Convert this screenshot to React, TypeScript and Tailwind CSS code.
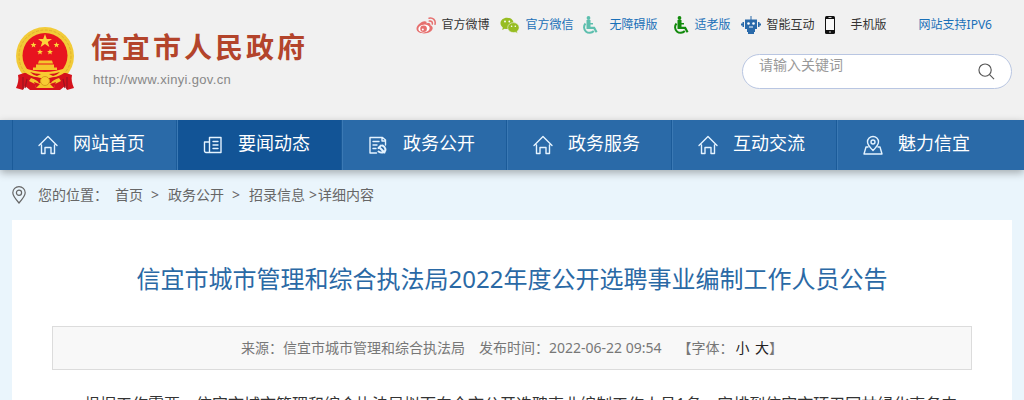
import type { ReactNode } from 'react'

const Emblem = () => (
  <svg viewBox="0 0 60 65" className="h-[65px] w-[60px] shrink-0">
    <circle cx="30" cy="30" r="29" fill="#f2cb38" />
    <circle cx="30" cy="30" r="26" fill="none" stroke="#e0b02e" strokeWidth="1" strokeDasharray="3 1.500" />
    <path d="M9 47l-6 2c1 4 0 9-2 13l7 2 2-4 5 4h30l5-4 2 4 7-2c-2-4-3-9-2-13l-6-2z" fill="#d5121c" />
    <path d="M8 51v12M12 53l-2 9M52 51v12M48 53l2 9" stroke="#9c1420" strokeWidth="1.200" />
    <circle cx="30" cy="29.500" r="22.500" fill="#e8141f" />
    <path d="M30 8l1.800 5h5.200l-4.200 3.100 1.600 5-4.400-3-4.400 3 1.600-5L23 13h5.200z" fill="#fcd53a" />
    <path d="M18.500 16l.8 1.900 2.100.1-1.600 1.400.5 2.100-1.800-1.200-1.800 1.200.5-2.100-1.600-1.400 2.100-.1zM41.500 16l.8 1.900 2.100.1-1.600 1.400.5 2.100-1.800-1.200-1.800 1.200.5-2.100-1.600-1.400 2.100-.1zM25 23l.8 1.900 2.100.1-1.600 1.400.5 2.100-1.800-1.200-1.800 1.200.5-2.100-1.600-1.400 2.100-.1zM35 23l.8 1.900 2.100.1-1.600 1.400.5 2.100-1.800-1.200-1.800 1.200.5-2.100-1.600-1.400 2.100-.1z" fill="#fcd53a" />
    <path d="M24 34.500h13l1 3H23zM21 38.500h18v3h3v2.500H18v-2.500h3z" fill="#f5c52c" />
    <path d="M12 43c5 1 11 3 18 3s13-2 18-3c2 1 2 3 1 4-5 4-11 4-15 5h-8c-4-1-10-1-15-5-1-1-1-3 1-4z" fill="#f8cc32" />
    <path d="M15 46c4 1 7 2 11 2l-4 2c-3-1-5-2-7-4zM45 46c-4 1-7 2-11 2l4 2c3-1 5-2 7-4z" fill="#d5121c" />
    <path d="M16 52c4 1 7 3 8 5h12c1-2 4-4 8-5l2 3-6 3-1 4H21l-1-4-6-3z" fill="#f5c52c" />
    <path d="M19 56l6 2-4 4zM41 56l-6 2 4 4z" fill="#d5121c" />
    <circle cx="30" cy="55" r="4.500" fill="#f8cc32" stroke="#d99b1c" strokeWidth="1" />
  </svg>
)

const Weibo = () => (
  <svg viewBox="0 0 20 17" className="h-[17px] w-5">
    <path d="M8.500 4.200C5 4.500.5 8.600.5 11.800c0 2.900 3.600 4.700 7.500 4.700 5 0 8.700-2.700 8.700-5.400 0-1.700-1.400-2.500-2.400-2.800.7-2-.8-3-3.800-1.900C11 4.800 10 4 8.500 4.200z" fill="#e6706f" />
    <ellipse cx="8" cy="11.500" rx="5.700" ry="3.900" fill="#fff" transform="rotate(-8 8 11.500)" />
    <circle cx="7.600" cy="11.700" r="3.300" fill="#e6706f" />
    <circle cx="6.800" cy="12.400" r="1" fill="#fff" />
    <path d="M13 1.200c4-.9 7 2 6 6M13.300 4c2-.4 3.400 1 3 3" fill="none" stroke="#e6706f" strokeWidth="1.500" strokeLinecap="round" />
  </svg>
)

const Wechat = () => (
  <svg viewBox="0 0 20 17" className="h-[17px] w-5">
    <path d="M7 .8C3.300.8.5 3.200.5 6.300c0 1.700.9 3.200 2.300 4.200L2.200 13l2.500-1.300c.8.2 1.500.3 2.300.3 3.700 0 6.600-2.500 6.600-5.700S10.700.8 7 .8z" fill="#97bd22" />
    <path d="M13.500 5.600c-3.300 0-5.800 2.200-5.800 5s2.500 5 5.800 5c.7 0 1.300-.1 1.900-.3l2.200 1.300-.6-2.100c1.300-.9 2.100-2.300 2.100-3.900 0-2.800-2.400-5-5.600-5z" fill="#97bd22" stroke="#f1f1f1" strokeWidth=".6" />
    <g fill="#fff">
      <circle cx="5" cy="4.500" r=".9" />
      <circle cx="9.300" cy="4.500" r=".9" />
      <circle cx="11.600" cy="9.200" r=".8" />
      <circle cx="15.300" cy="9.200" r=".8" />
    </g>
  </svg>
)

const Wheelchair = ({ color }: { color: string }) => (
  <svg viewBox="0 0 16 18" className="h-[18px] w-4">
    <circle cx="6.500" cy="2" r="1.900" fill={color} />
    <path d="M4.500 4h4v3H11v1.500H8.500v2.200h4.300l2.700 5-1.800 1-2.200-3.700H4.500z" fill={color} />
    <path d="M3.500 7.500a5 5 0 1 0 8.300 7.500" fill="none" stroke={color} strokeWidth="2" />
  </svg>
)

const Robot = () => (
  <svg viewBox="0 0 20 18" className="h-[18px] w-5" fill="#2a6aaa">
    <path d="M9.500 0h1v4h-1zM4 3.500h12v9.500H4zM1.500 6H3v5H1.500zM17 6h1.500v5H17zM0 7.500h1.500v2H0zM18.500 7.500H20v2h-1.500zM6 13h8v3h-1v2H7v-2H6z" />
    <circle cx="7.500" cy="7.500" r="1.300" fill="#fff" />
    <circle cx="12.500" cy="7.500" r="1.300" fill="#fff" />
    <path d="M8 10.500h4v1H8z" fill="#fff" />
  </svg>
)

const Phone = () => (
  <svg viewBox="0 0 10 18" className="h-[18px] w-2.5">
    <rect width="10" height="18" rx="1.500" fill="#111" />
    <path d="M1 3h8v11H1z" fill="#f8f8f8" />
    <path d="M3.500 1.500h3M4 16h2" stroke="#ccc" strokeWidth="1" />
  </svg>
)

const NavSvg = ({ children }: { children: ReactNode }) => (
  <svg viewBox="0 0 20 20" className="size-5 shrink-0" fill="none" stroke="#e4f3ff" strokeWidth="1.400" strokeLinejoin="round" strokeLinecap="round">
    {children}
  </svg>
)

const Home = () => (
  <NavSvg>
    <path d="M1 10.500L10 1.500l9 9M3.500 10v8.500H7v-6h6v6h3.500V10" />
  </NavSvg>
)

const News = () => (
  <NavSvg>
    <path d="M6.500 17.500v-15H18v15H3a1.500 1.500 0 0 1-1.500-1.500V7h5M10 6.500h5M10 10h5M10 13.500h5" />
  </NavSvg>
)

const Party = () => (
  <NavSvg>
    <path d="M8.500 18H2V2.500h12.500L17.500 5v5M14 3v3h3M5 6.500h6M5 10h4M5 13.500h3" />
    <path d="M11.500 12.500l5 5M10.500 13l2.500-2.500M14.500 10.500c3 1.500 4 5 1.500 6.500-2 1-4 .5-5.500-.5" strokeWidth="2" />
  </NavSvg>
)

const Charm = () => (
  <NavSvg>
    <path d="M10 15.500C6.500 12 4.500 9.500 4.500 7a5.500 5.500 0 0 1 11 0c0 2.500-2 5-5.500 8.500zM5 12H3l-2 7h18l-2-7h-2" />
    <circle cx="10" cy="7" r="2" />
  </NavSvg>
)

const menu = [
  { name: '网站首页', icon: <Home /> },
  { name: '要闻动态', icon: <News />, active: true },
  { name: '政务公开', icon: <Party /> },
  { name: '政务服务', icon: <Home /> },
  { name: '互动交流', icon: <Home /> },
  { name: '魅力信宜', icon: <Charm /> },
]

const TopLinks = () => (
  <div className="flex h-5 items-center pr-5 text-xs leading-5 text-[#333]">
    <a href="#" className="flex items-center gap-1.5"><Weibo />官方微博</a>
    <a href="#" className="ml-2.5 flex items-center gap-1.5 text-[#1a70b8]"><Wechat />官方微信</a>
    <a href="#" className="ml-2 flex items-center gap-3 text-[#1a70b8]"><Wheelchair color="#5dbfae" />无障碍版</a>
    <a href="#" className="ml-[15px] flex items-center gap-1.5 text-[#1a70b8]"><Wheelchair color="#128a0c" />适老版</a>
    <a href="#" className="ml-2.5 flex items-center gap-1.5"><Robot />智能互动</a>
    <a href="#" className="ml-2.5 flex items-center gap-4"><Phone />手机版</a>
    <a href="#" className="ml-8 text-[#1a70b8]">网站支持IPV6</a>
  </div>
)

const Header = () => (
  <header className="h-[120px] bg-[#f1f1f1] px-3">
    <div className="mx-auto flex max-w-[1000px] items-start justify-between">
      <a href="#" className="flex gap-4 pt-[26px] pl-[3px]">
        <Emblem />
        <div>
          <h1 className="text-[28px] leading-[42px] font-bold tracking-[3px] text-[#b3442b]">信宜市人民政府</h1>
          <p className="pl-0.5 font-['Liberation_Sans'] text-[13px] leading-6 tracking-wide text-[#888]">http://www.xinyi.gov.cn</p>
        </div>
      </a>
      <div className="flex flex-col items-end pt-[15px]">
        <TopLinks />
        <form className="mt-[19px] flex h-[35px] w-[270px] rounded-full border border-[#b9c6e2] bg-white px-4">
          <input
            type="text"
            aria-label="请输入关键词"
            placeholder="请输入关键词"
            className="h-5 min-w-0 flex-1 text-sm outline-none placeholder:text-[#999]"
          />
          <button type="submit" aria-label="搜索">
            <svg viewBox="0 0 18 18" className="size-[17px]" fill="none" stroke="#555" strokeWidth="1.200">
              <circle cx="7.500" cy="7.500" r="6.500" />
              <path d="M12 12l5 5" />
            </svg>
          </button>
        </form>
      </div>
    </div>
  </header>
)

const Nav = () => (
  <nav className="bg-[#2a6aa8] px-3 shadow-[0_3px_8px_rgba(0,0,0,0.3)]">
    <ul className="mx-auto flex max-w-[1000px] border-l border-[#1b5b99]">
      {menu.map((item) => (
        <li
          key={item.name}
          className={`group w-[165px] border-r border-[#3b79b4] last:border-r-0 ${item.active ? 'bg-[#125496]' : ''}`}
        >
          <a href="#" className="flex h-[50px] items-center gap-[15px] border-r border-[#1b5b99] pl-[25px] text-lg text-white group-last:border-r-0">
            {item.icon}
            <span className="pb-1">{item.name}</span>
          </a>
        </li>
      ))}
    </ul>
  </nav>
)

const Breadcrumb = () => (
  <div className="flex h-[50px] items-center text-sm text-[#666]">
    <svg viewBox="0 0 14 18" className="mr-3 h-[18px] w-3.5" fill="none" stroke="#666" strokeWidth="1.200">
      <path d="M7 17C3 12.500 .8 9.700.8 6.800a6.200 6.200 0 0 1 12.400 0C13.200 9.700 11 12.500 7 17z" />
      <circle cx="7" cy="6.800" r="2.600" />
    </svg>
    <span className="mr-[7px]">您的位置：</span>
    <a href="#">首页</a>
    <span className="mr-[9px] ml-2">&gt;</span>
    <a href="#">政务公开</a>
    <span className="mr-[9px] ml-2">&gt;</span>
    <a href="#">招录信息</a>
    <span className="ml-1">&gt;</span>
    <span className="ml-px">详细内容</span>
  </div>
)

const App = () => {
  return (
    <div className="h-screen overflow-hidden bg-[#eaf5fc] font-['Noto_Sans','Noto_Sans_CJK_SC',sans-serif]">
      <Header />
      <Nav />
      <main className="px-3">
        <div className="mx-auto max-w-[1000px]">
          <Breadcrumb />
          <article className="bg-white px-10 pt-[41px] pb-10">
            <h2 className="text-center text-2xl leading-9 text-[#2a69a5]">
              信宜市城市管理和综合执法局2022年度公开选聘事业编制工作人员公告
            </h2>
            <div className="mt-[29px] flex h-11 items-center justify-center border border-[#dcdcdc] bg-[#f8f8f8] text-sm text-[#777]">
              <span>来源：信宜市城市管理和综合执法局</span>
              <span className="ml-3.5">发布时间：2022-06-22 09:54</span>
              <span className="ml-4">
                【字体：<button type="button" className="mx-0.5 text-[#222]">小</button> <button type="button" className="text-[#222]">大</button>】
              </span>
            </div>
            <p className="mt-[18px] indent-8 text-base leading-8 text-[#333]">
              根据工作需要，信宜市城市管理和综合执法局拟面向全市公开选聘事业编制工作人员1名，安排到信宜市环卫园林绿化事务中心工作。
            </p>
          </article>
        </div>
      </main>
    </div>
  )
}

export default App
